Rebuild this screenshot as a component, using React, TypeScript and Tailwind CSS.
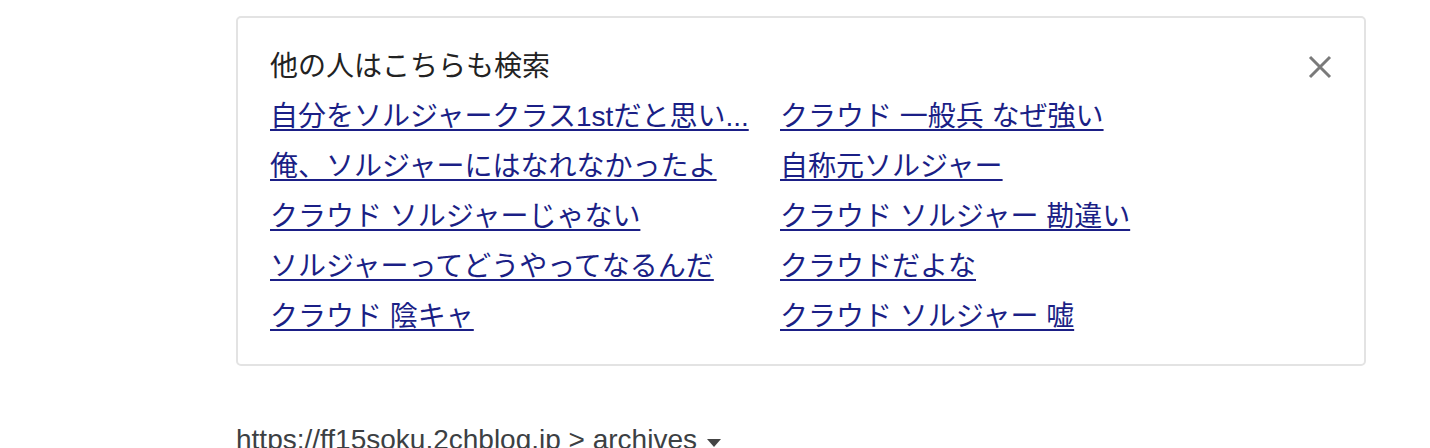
import React from 'react';

const related: [string, string][] = [
  ['自分をソルジャークラス1stだと思い...', 'クラウド 一般兵 なぜ強い'],
  ['俺、ソルジャーにはなれなかったよ', '自称元ソルジャー'],
  ['クラウド ソルジャーじゃない', 'クラウド ソルジャー 勘違い'],
  ['ソルジャーってどうやってなるんだ', 'クラウドだよな'],
  ['クラウド 陰キャ', 'クラウド ソルジャー 嘘'],
];

const App: React.FC = () => {
  return (
    <div className="w-[1430px] h-[448px] overflow-hidden bg-white font-['Liberation_Sans','Noto_Sans_CJK_JP',sans-serif]">
      <div className="ml-[236px] mt-[16px] w-[1130px] rounded-[5px] border-2 border-[#e3e3e3] pl-[32px] pr-[30px] pt-[24px] pb-[22px]">
        {/* header */}
        <div className="flex items-center justify-between h-[50px]">
          <h3 className="text-[28px] leading-[50px] text-[#222]">他の人はこちらも検索</h3>
          <button className="w-[28px] h-[28px] flex items-center justify-center">
            <svg width="24" height="24" viewBox="0 0 24 24">
              <path d="M2 2 L22 22 M22 2 L2 22" stroke="#7a7a7a" strokeWidth="3" fill="none" />
            </svg>
          </button>
        </div>

        {/* related searches */}
        <div className="grid grid-cols-[510px_1fr]">
          {related.map(([a, b], i) => (
            <React.Fragment key={i}>
              <div className="h-[50px] leading-[50px]">
                <a href="#" className="text-[28px] text-[#1b1f86] underline underline-offset-[3px] decoration-[2px]">{a}</a>
              </div>
              <div className="h-[50px] leading-[50px]">
                <a href="#" className="text-[28px] text-[#1b1f86] underline underline-offset-[3px] decoration-[2px]">{b}</a>
              </div>
            </React.Fragment>
          ))}
        </div>
      </div>

      {/* next result url */}
      <div className="ml-[236px] mt-[58px] flex items-center gap-[10px] text-[28px] leading-[32px] text-[#3c4043]">
        <span>https://ff15soku.2chblog.jp &gt; archives</span>
        <svg width="14" height="9" viewBox="0 0 14 9" className="mt-[6px]">
          <path d="M0 0 L14 0 L7 8 Z" fill="#444" />
        </svg>
      </div>
    </div>
  );
};

export default App;
